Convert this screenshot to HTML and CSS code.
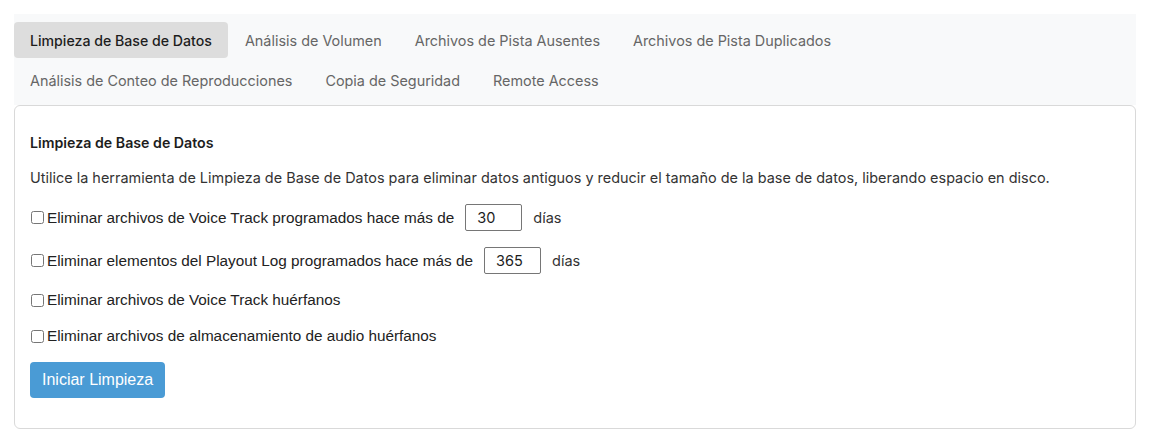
FILE: index.html
```html
<!DOCTYPE html>
<html lang="es">
<head>
<meta charset="utf-8">
<title>Limpieza de Base de Datos</title>
<link rel="stylesheet" href="styles.css">
</head>
<body>
<div class="page">
  <nav class="tabs">
    <a class="tab active">Limpieza de Base de Datos</a>
    <a class="tab">Análisis de Volumen</a>
    <a class="tab">Archivos de Pista Ausentes</a>
    <a class="tab">Archivos de Pista Duplicados</a>
    <a class="tab">Análisis de Conteo de Reproducciones</a>
    <a class="tab">Copia de Seguridad</a>
    <a class="tab">Remote Access</a>
  </nav>
  <section class="panel">
    <h2 class="title">Limpieza de Base de Datos</h2>
    <p class="desc">Utilice la herramienta de Limpieza de Base de Datos para eliminar datos antiguos y reducir el tamaño de la base de datos, liberando espacio en disco.</p>
    <div class="row">
      <label class="check"><input type="checkbox"> Eliminar archivos de Voice Track programados hace más de</label>
      <input class="num" type="text" value="30">
      <span class="unit">días</span>
    </div>
    <div class="row">
      <label class="check"><input type="checkbox"> Eliminar elementos del Playout Log programados hace más de</label>
      <input class="num" type="text" value="365">
      <span class="unit">días</span>
    </div>
    <div class="row">
      <label class="check"><input type="checkbox"> Eliminar archivos de Voice Track huérfanos</label>
    </div>
    <div class="row">
      <label class="check"><input type="checkbox"> Eliminar archivos de almacenamiento de audio huérfanos</label>
    </div>
    <button class="btn" type="button">Iniciar Limpieza</button>
  </section>
</div>
</body>
</html>
```

FILE: styles.css
```css
html, body {
  margin: 0;
  padding: 0;
  background: #ffffff;
}
body {
  font-family: Inter, "Liberation Sans", sans-serif;
  color: #212529;
}
.page {
  padding: 14px 14px;
}
.tabs {
  background: #f8f9fa;
  display: flex;
  flex-wrap: wrap;
  row-gap: 4px;
  column-gap: 1px;
  padding: 8px 0 7px 0;
}
.tab {
  display: flex;
  align-items: center;
  height: 36px;
  padding: 0 16px;
  font-size: 14.4px;
  color: #666666;
  border-radius: 4px;
  cursor: pointer;
}
.tab.active {
  background: #dddddd;
  color: #1d1d1d;
  font-weight: 500;
  font-size: 14.15px;
}
.panel {
  border: 1px solid #d9d9d9;
  border-radius: 6px;
  padding: 27px 16px 30px 15px;
}
.title {
  margin: 0 0 15px 0;
  font-size: 14.2px;
  font-weight: 600;
  line-height: 20px;
  color: #1d1d1d;
}
.desc {
  margin: 0 0 16px 0;
  font-size: 14.45px;
  line-height: 20px;
  color: #333333;
}
.row {
  display: flex;
  align-items: center;
  margin-bottom: 16px;
  min-height: 20px;
}
.check {
  font-family: "Liberation Sans", Arial, sans-serif;
  font-size: 15.3px;
  line-height: 20px;
  color: #222222;
  display: flex;
  align-items: center;
}
.check input {
  margin: 0 3px 0 1px;
  width: 13px;
  height: 13px;
}
.num {
  width: 57px;
  height: 27px;
  box-sizing: border-box;
  margin: 0 11px 0 11px;
  padding: 0 11px;
  border: 1px solid #767676;
  border-radius: 2px;
  font-family: Inter, sans-serif;
  font-size: 14.5px;
  color: #1d1d1d;
}
.unit {
  font-size: 14.5px;
  color: #333333;
}
.btn {
  display: block;
  margin-top: 1px;
  height: 36px;
  padding: 0 12px;
  background: #4a9bd5;
  color: #ffffff;
  border: none;
  border-radius: 4px;
  font-family: "Liberation Sans", Arial, sans-serif;
  font-size: 16px;
}
```
